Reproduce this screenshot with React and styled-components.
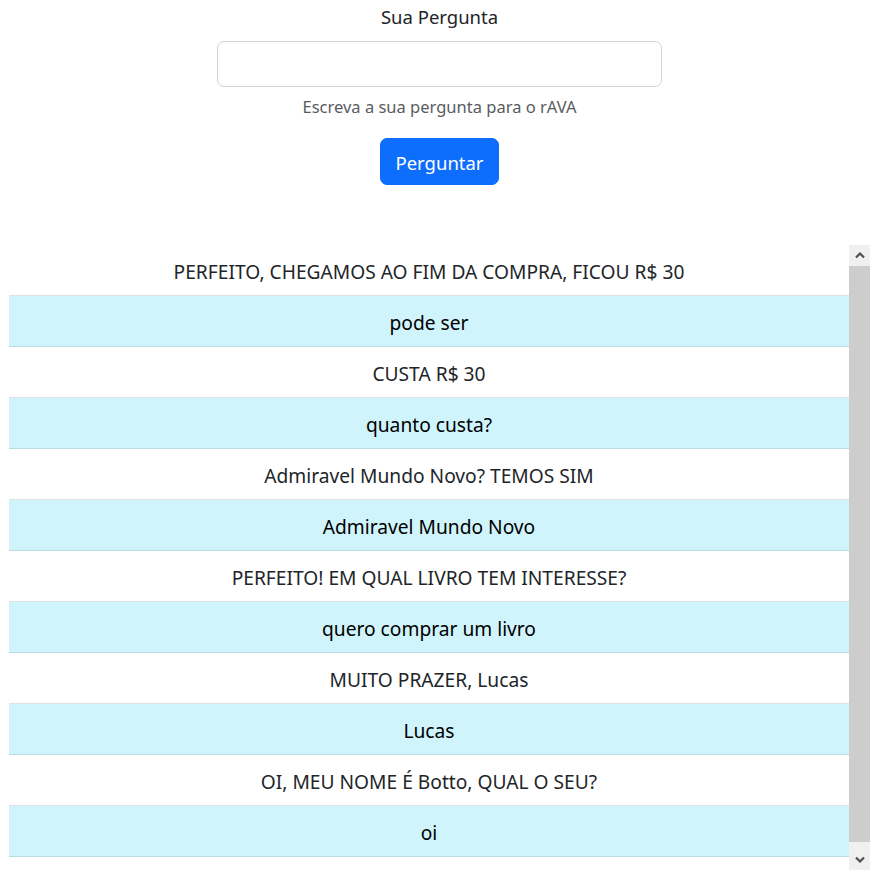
import React from 'react';
import styled, { createGlobalStyle } from 'styled-components';

const GlobalStyle = createGlobalStyle`
  html, body {
    margin: 0;
    padding: 0;
    background: #fff;
  }
  body {
    font-family: "Noto Sans", "Open Sans", sans-serif;
    color: #212529;
  }
`;

const Page = styled.div`
  padding: 0 6px 0 9px;
`;

const Form = styled.form`
  display: flex;
  flex-direction: column;
  align-items: center;
  padding-top: 2px;
`;

const Label = styled.label`
  font-size: 18.5px;
  line-height: 30px;
  margin-bottom: 9px;
`;

const Input = styled.input`
  box-sizing: border-box;
  width: 445px;
  height: 46px;
  border: 1px solid #ced4da;
  border-radius: 7px;
  padding: 7px 15px;
  font: inherit;
  font-size: 18.5px;
  outline: none;
`;

const Help = styled.div`
  margin-top: 7px;
  font-size: 16.5px;
  line-height: 26px;
  color: #595c5f;
`;

const Button = styled.button`
  margin-top: 18px;
  box-sizing: border-box;
  height: 47px;
  padding: 2px 14px 0;
  border: 1px solid #0d6efd;
  border-radius: 7px;
  background: #0d6efd;
  color: #fff;
  font-family: inherit;
  font-size: 18.5px;
  cursor: pointer;
`;

const History = styled.div`
  margin-top: 60px;
  height: 625px;
  display: flex;
`;

const Table = styled.div`
  flex: 1;
  overflow: hidden;
`;

const Row = styled.div`
  box-sizing: border-box;
  height: 51px;
  padding-top: 2px;
  display: flex;
  align-items: center;
  justify-content: center;
  font-size: 19.2px;
  background: ${(p) => (p.$info ? '#cff4fc' : '#fff')};
  color: ${(p) => (p.$info ? '#000' : '#212529')};
  border-bottom: 1px solid ${(p) => (p.$info ? '#badce3' : '#dee2e6')};
`;

const Scrollbar = styled.div`
  width: 21px;
  display: flex;
  flex-direction: column;
  background: #f0f0f0;
`;

const ScrollButton = styled.div`
  height: 21px;
  display: flex;
  align-items: center;
  justify-content: center;
  flex-shrink: 0;
`;

const Thumb = styled.div`
  flex: 1;
  margin-bottom: 7px;
  background: #cdcdcd;
`;

const Chevron = ({ down }) => (
  <svg width="10" height="7" viewBox="0 0 10 7">
    <path
      d={down ? 'M1 1.5 L5 5.5 L9 1.5' : 'M1 5.5 L5 1.5 L9 5.5'}
      fill="none"
      stroke="#505050"
      strokeWidth="2.2"
    />
  </svg>
);

const messages = [
  'PERFEITO, CHEGAMOS AO FIM DA COMPRA, FICOU R$ 30',
  'pode ser',
  'CUSTA R$ 30',
  'quanto custa?',
  'Admiravel Mundo Novo? TEMOS SIM',
  'Admiravel Mundo Novo',
  'PERFEITO! EM QUAL LIVRO TEM INTERESSE?',
  'quero comprar um livro',
  'MUITO PRAZER, Lucas',
  'Lucas',
  'OI, MEU NOME É Botto, QUAL O SEU?',
  'oi',
];

const App = () => {
  return (
    <Page>
      <GlobalStyle />
      <Form onSubmit={(e) => e.preventDefault()}>
        <Label htmlFor="pergunta">Sua Pergunta</Label>
        <Input id="pergunta" type="text" />
        <Help>Escreva a sua pergunta para o rAVA</Help>
        <Button type="submit">Perguntar</Button>
      </Form>
      <History>
        <Table>
          {messages.map((m, i) => (
            <Row key={i} $info={i % 2 === 1}>
              {m}
            </Row>
          ))}
        </Table>
        <Scrollbar>
          <ScrollButton>
            <Chevron />
          </ScrollButton>
          <Thumb />
          <ScrollButton>
            <Chevron down />
          </ScrollButton>
        </Scrollbar>
      </History>
    </Page>
  );
};

export default App;
